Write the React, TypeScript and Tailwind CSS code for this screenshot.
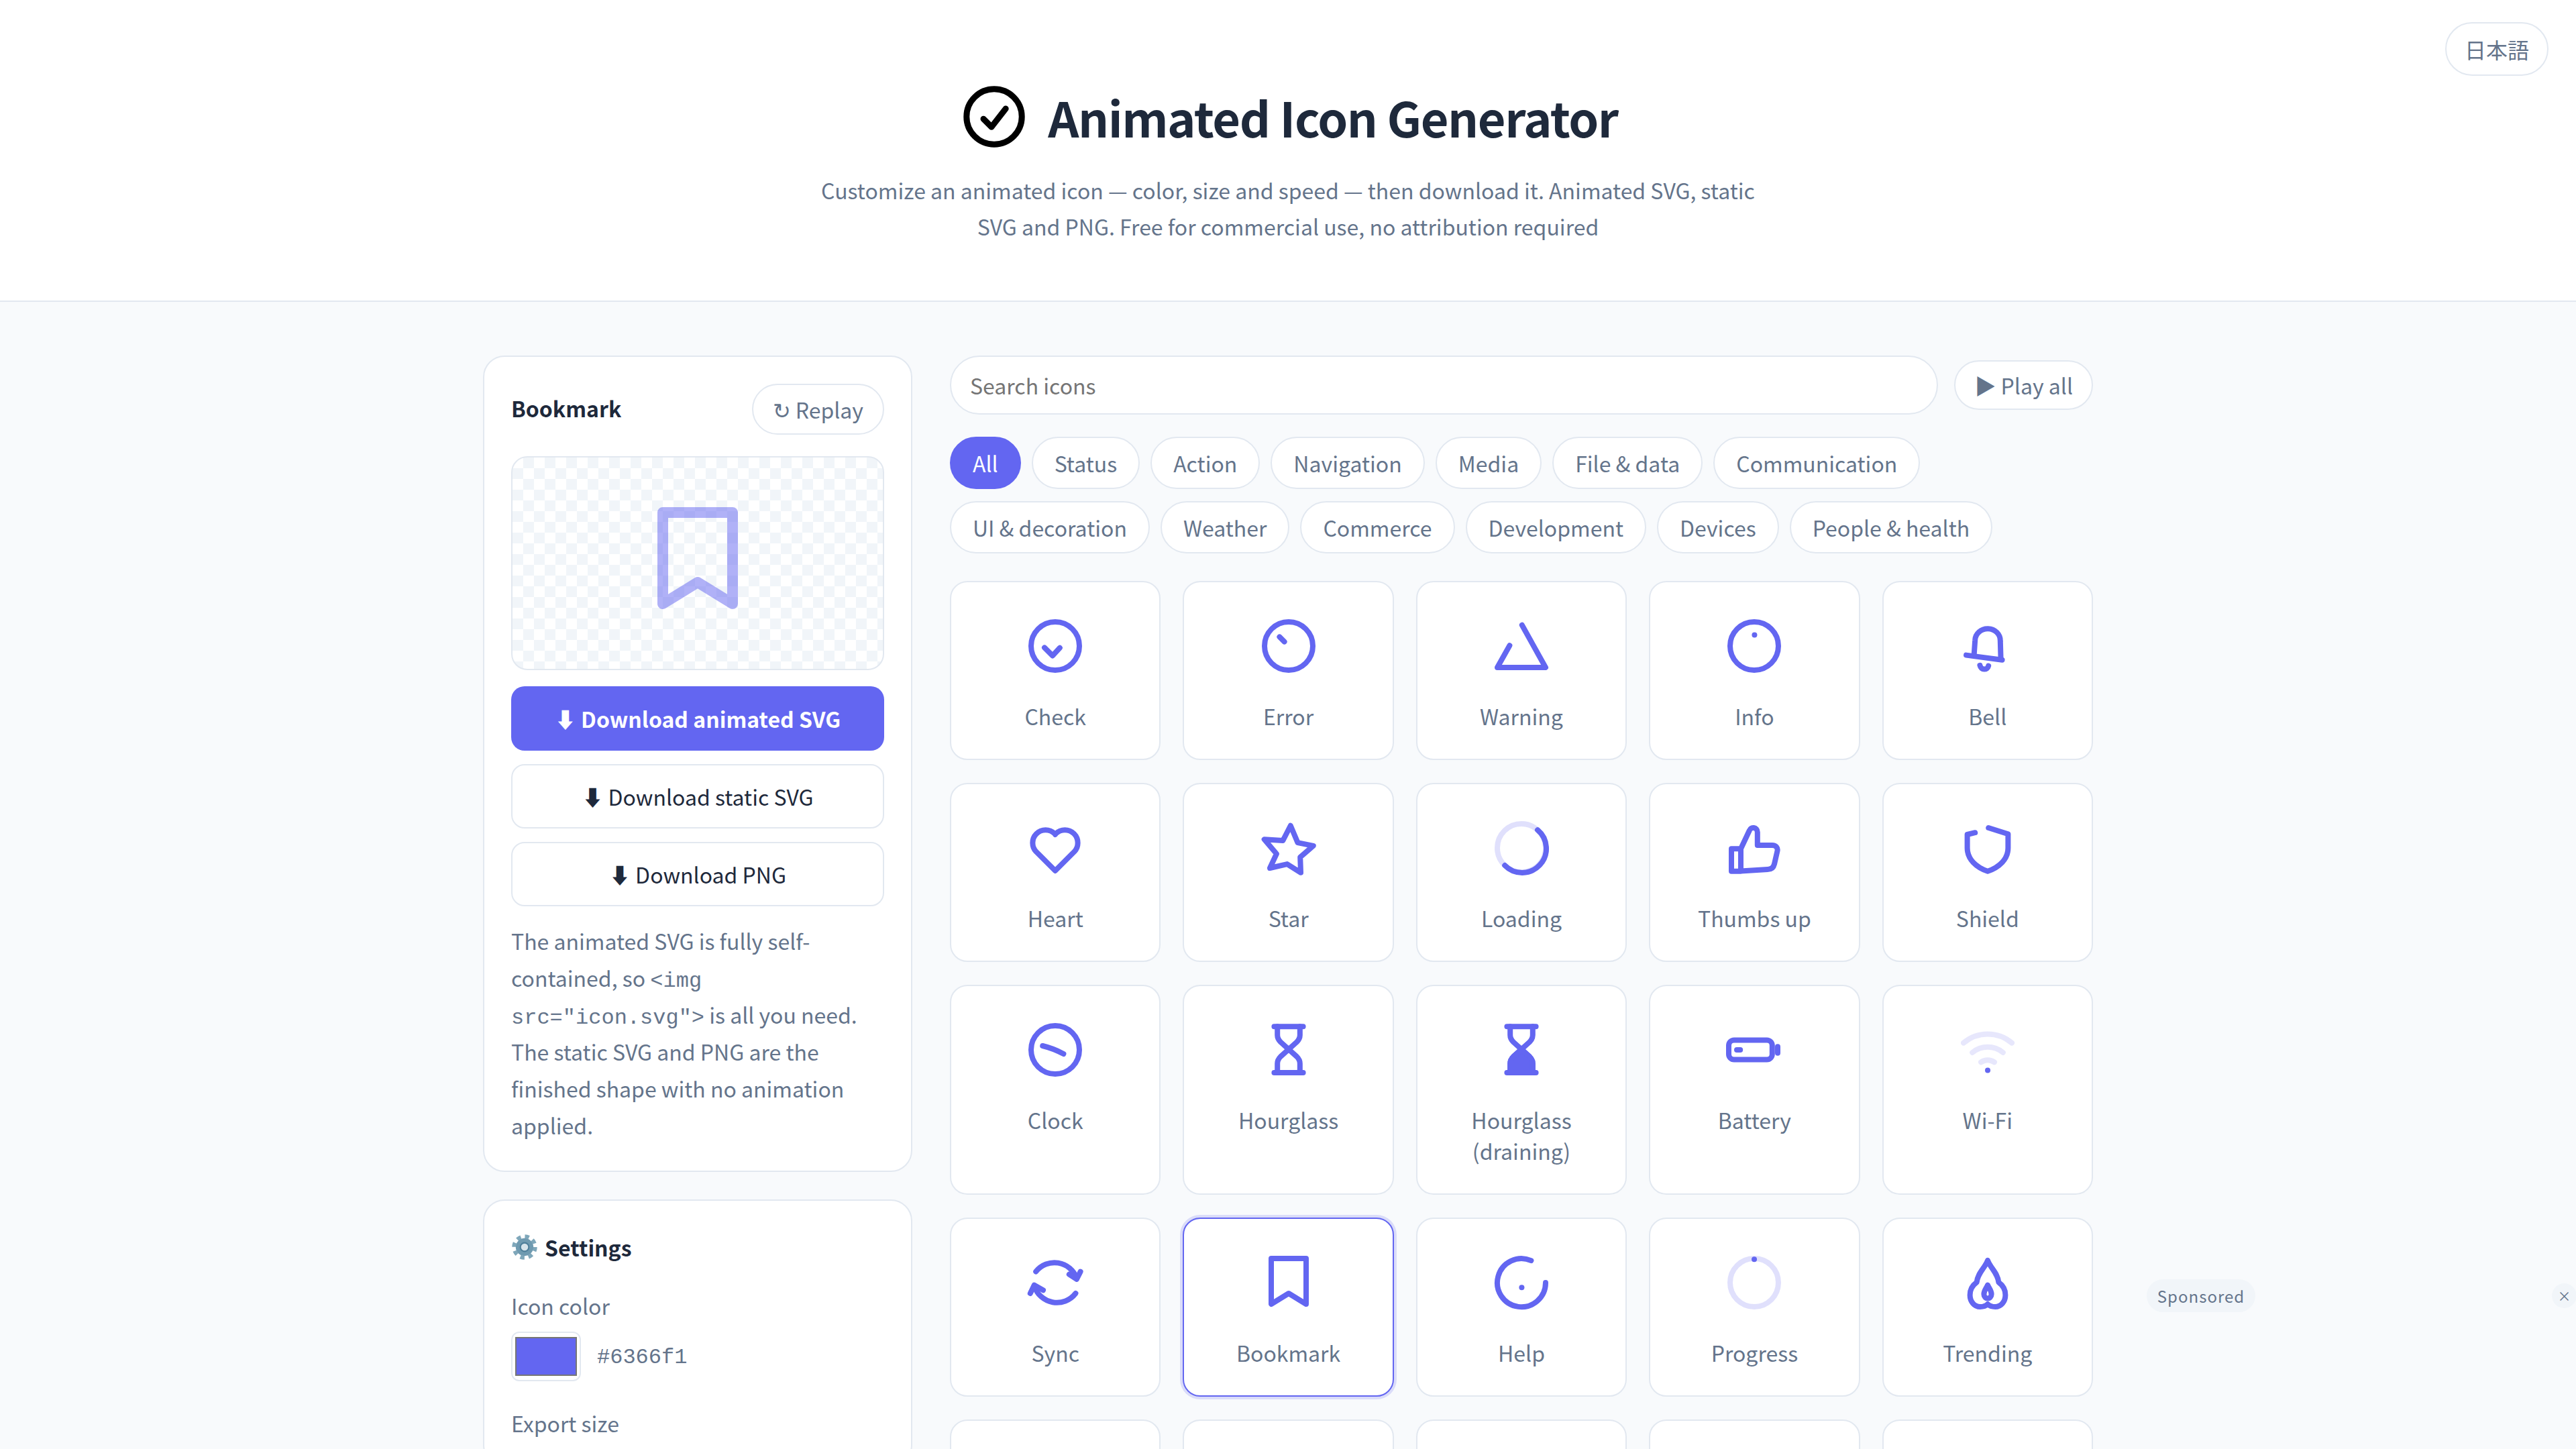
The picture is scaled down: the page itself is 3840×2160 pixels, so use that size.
import React from "react";

type IconDef = { name: string; body: React.ReactNode };

const Ring = () => <circle cx="12" cy="12" r="9" />;
const Track = () => <circle cx="12" cy="12" r="9" opacity="0.2" />;

const hourglassLines = (
  <g transform="translate(-0.2 0)">
    <path d="M6.8 3.3h10.8M6.8 20.5h10.8" />
    <path d="M8 3.3v3.2c0 1.1.5 1.9 1.2 2.6l6 5.4c.7.7 1.2 1.5 1.2 2.6v3.4" />
    <path d="M16.4 3.3v3.2c0 1.1-.5 1.9-1.2 2.6l-6 5.4c-.7.7-1.2 1.5-1.2 2.6v3.4" />
  </g>
);

const icons: IconDef[] = [
  { name: "Check", body: <><Ring /><path d="M8 12.6l3 3 2.7-2.9" /></> },
  { name: "Error", body: <><Ring /><path d="M8.6 8.6l1.8 1.8" /></> },
  { name: "Warning", body: <path d="M12.2 4.2 21 20H3l4.6-8.2" /> },
  { name: "Info", body: <><Ring /><path d="M12.1 7.9h.01" /></> },
  {
    name: "Bell",
    body: (
      <>
        <path d="M4 15.4 17.4 17.2" />
        <path d="M6.9 15.6 7.3 9.8a4.7 4.4 0 0 1 9.4.3l.2 6.8" />
        <path d="M9.1 19.2c.4 1.9 2.8 1.9 3.2.2" />
      </>
    ),
  },
  {
    name: "Heart",
    body: <path d="M12 20.5l-7-7a4.8 4.8 0 0 1 0-6.8 4.8 4.8 0 0 1 6.8 0l.2.3.2-.3a4.8 4.8 0 0 1 6.8 0 4.8 4.8 0 0 1 0 6.8z" />,
  },
  {
    name: "Star",
    body: <polygon points="12.7,3.7 15.37,10.04 21.2,11.2 16.3,15.44 16.5,21.2 11.44,18.03 5,19.5 7.48,14.19 2.9,8.8 9.85,9.26" />,
  },
  { name: "Loading", body: <><Track /><path d="M18 5.3A9 9 0 1 1 5.8 18.5" /></> },
  {
    name: "Thumbs up",
    body: (
      <path d="M3.5 12.3H7v8.4H3.5zM7 12.3l3.2-6.8c.5-1.4 3-1.4 3 .6v4.9h5.5c1.4 0 2.2 1 1.9 2.2l-1.1 4.8c-.3 1.3-1.1 2-2.5 2L7 20.6" />
    ),
  },
  {
    name: "Shield",
    body: <path d="M12.3 4.5 19.6 6.8V12c0 4.2-3.3 7.2-7.6 8.7C7.7 19.2 4.4 16.2 4.4 12V7l2.9-.7" />,
  },
  { name: "Clock", body: <><Ring /><path d="M7.3 10.5c2.5.6 5.2 1.6 7.8 3" /></> },
  { name: "Hourglass", body: hourglassLines },
  {
    name: "Hourglass (draining)",
    body: (
      <>
        {hourglassLines}
        <path fill="currentColor" d="M7.8 20.5v-3.4c0-1.1.5-1.9 1.2-2.6l3-2.7 3 2.7c.7.7 1.2 1.5 1.2 2.6v3.4z" />
      </>
    ),
  },
  {
    name: "Battery",
    body: (
      <>
        <rect x="2.5" y="8.4" width="16.2" height="7.2" rx="2" />
        <path d="M5.5 12h1.3M20.75 10.8v2.4" />
      </>
    ),
  },
  {
    name: "Wi-Fi",
    body: (
      <>
        <g opacity="0.15">
          <path d="M3 9.4a14 14 0 0 1 18 0" />
          <path d="M6.3 13a9 9 0 0 1 11.4 0" />
          <path d="M9.5 16.6a4.5 4.5 0 0 1 5 0" />
        </g>
        <path d="M12 19.6h.01" />
      </>
    ),
  },
  {
    name: "Sync",
    body: (
      <>
        <path d="M4.8 7.9A8.8 8.8 0 0 1 20 10.4" />
        <path d="M17.2 8.9 20 10.7l1.4-2.8" />
        <path d="M19.6 16A8.8 8.8 0 0 1 4.2 13.2" />
        <path d="M2.7 16l1.5-3.1 3.3 1.9" />
      </>
    ),
  },
  { name: "Bookmark", body: <path d="M5.5 3h13v17l-6.5-4-6.5 4z" /> },
  {
    name: "Help",
    body: (
      <>
        <path d="M15.6 3.8A9 9 0 1 0 21 12" />
        <path d="M12.1 13.8h.01" />
      </>
    ),
  },
  { name: "Progress", body: <><Track /><path d="M12 3.3h.01" /></> },
  {
    name: "Trending",
    body: (
      <>
        <path d="M12 3.7c1 2.8 3.8 4.8 4.1 8.2 1.5 1.1 2.5 2.6 2.5 4.7 0 2.4-1.6 4.4-3.8 4.4-1.2 0-2.2-.4-2.8-1-.6.6-1.6 1-2.8 1-2.2 0-3.8-2-3.8-4.4 0-2.1 1-3.6 2.5-4.7.3-3.4 3.1-5.4 4.1-8.2z" />
        <path d="M12 12.9c.5 1.2 1.4 2 1.4 3.4a1.4 1.6 0 0 1-2.8 0c0-1.4.9-2.2 1.4-3.4z" />
      </>
    ),
  },
];

const categoryRows = [
  ["All", "Status", "Action", "Navigation", "Media", "File & data", "Communication"],
  ["UI & decoration", "Weather", "Commerce", "Development", "Devices", "People & health"],
];

function Glyph({ children, className, weight = "2" }: { children: React.ReactNode; className: string; weight?: string }) {
  return (
    <svg viewBox="0 0 24 24" fill="none" stroke="currentColor" strokeWidth={weight} strokeLinecap="round" strokeLinejoin="round" className={className}>
      {children}
    </svg>
  );
}

function SettingsGear() {
  return (
    <svg viewBox="0 0 36 36" className="w-[40px] h-[38px] shrink-0">
      <circle cx="18" cy="18" r="15" fill="none" stroke="#7fa7ba" strokeWidth="5.5" strokeDasharray="6 5.78" />
      <circle cx="18" cy="18" r="12.5" fill="#6f9ab0" />
      <circle cx="18" cy="18" r="6" fill="#d5e3ea" stroke="#4e7f9a" strokeWidth="2" />
    </svg>
  );
}

function IconCard({ icon, selected }: { icon: IconDef; selected: boolean }) {
  return (
    <button
      className={
        selected
          ? "flex flex-col items-center pt-[47px] pb-[41px] px-[16px] bg-white rounded-[26px] border-2 border-[#6366f1] shadow-[0_0_0_4px_rgba(99,102,241,0.2)]"
          : "flex flex-col items-center pt-[47px] pb-[41px] px-[16px] bg-white rounded-[26px] border-2 border-[#e2e8f0]"
      }
    >
      <Glyph className="w-[96px] h-[96px] text-[#6366f1]">{icon.body}</Glyph>
      <span className="mt-[33px] text-[32px] leading-[46px] text-[#64748b] text-center">{icon.name}</span>
    </button>
  );
}

export default function App() {
  return (
    <div className="relative h-[2160px] overflow-hidden bg-[#f8fafc] font-['Noto_Sans_CJK_JP','Noto_Sans',sans-serif]">
      <button className="absolute top-[33px] right-[41px] h-[80px] px-[27px] rounded-full bg-white border-2 border-[#e2e8f0] text-[32px] text-[#64748b]">
        日本語
      </button>

      <header className="h-[450px] bg-white border-b-2 border-[#e2e8f0] flex flex-col items-center pt-[126px]">
        <h1 className="ml-[6px] flex items-center gap-[32px] h-[96px] text-[72px] font-bold tracking-[-1.44px] text-[#1e293b]">
          <Glyph weight="2.25" className="w-[96px] h-[96px] text-black">
            <circle cx="12" cy="12" r="10.3" />
            <path d="M8 12.8l3 3L16.3 9" />
          </Glyph>
          Animated Icon Generator
        </h1>
        <p className="mt-[34px] w-[1440px] text-center text-[32px] leading-[54.4px] text-[#64748b]">
          Customize an animated icon — color, size and speed — then download it. Animated SVG, static SVG and PNG. Free for commercial use, no attribution required
        </p>
      </header>

      <main className="w-[2400px] mx-auto pt-[80px] flex gap-[56px]">
        <aside className="w-[640px] shrink-0 flex flex-col gap-[41px]">
          <section className="bg-white rounded-[32px] border-2 border-[#e2e8f0] p-[40px]">
            <div className="flex items-center justify-between">
              <h2 className="mb-[4px] text-[32px] font-bold text-[#1e293b]">Bookmark</h2>
              <button className="h-[76px] px-[29px] rounded-full border-2 border-[#e2e8f0] text-[32px] text-[#64748b]">↻ Replay</button>
            </div>
            <div className="mt-[32px] h-[319px] rounded-[24px] border-2 border-[#e2e8f0] flex items-center justify-center bg-[repeating-conic-gradient(#f1f5f9_0_25%,#ffffff_0_50%)] bg-[length:32px_32px]">
              <Glyph className="mb-[8px] w-[192px] h-[192px] text-[#6366f1] opacity-50">
                <path d="M5.5 3h13v17l-6.5-4-6.5 4z" />
              </Glyph>
            </div>
            <div className="mt-[24px] flex flex-col gap-[20px]">
              <button className="h-[96px] rounded-[20px] bg-[#6366f1] text-white text-[32px] font-bold">⬇ Download animated SVG</button>
              <button className="h-[96px] rounded-[20px] bg-white border-2 border-[#e2e8f0] text-[#1e293b] text-[32px]">⬇ Download static SVG</button>
              <button className="h-[96px] rounded-[20px] bg-white border-2 border-[#e2e8f0] text-[#1e293b] text-[32px]">⬇ Download PNG</button>
            </div>
            <p className="mt-[24px] text-[32px] leading-[55px] text-[#64748b]">
              The animated SVG is fully self-contained, so{" "}
              <code className="font-['Liberation_Mono',monospace] text-[32px] leading-[40px]">{'<img src="icon.svg">'}</code> is all you need. The static SVG and PNG are the finished shape with no animation applied.
            </p>
          </section>

          <section className="bg-white rounded-[32px] border-2 border-[#e2e8f0] p-[40px]">
            <h2 className="flex items-center gap-[10px] text-[32px] font-bold text-[#1e293b] h-[58px]">
              <SettingsGear />
              Settings
            </h2>
            <div className="mt-[35px] text-[32px] leading-[46px] text-[#64748b]">Icon color</div>
            <div className="mt-[16px] flex items-center gap-[24px]">
              <div className="w-[104px] h-[74px] rounded-[12px] border-2 border-[#e2e8f0] bg-white flex items-center justify-center">
                <div className="w-[92px] h-[58px] bg-[#6366f1] border-2 border-[#767676]"></div>
              </div>
              <span className="pt-[3px] font-['Liberation_Mono',monospace] text-[32px] text-[#64748b]">#6366f1</span>
            </div>
            <div className="mt-[39px] text-[32px] leading-[46px] text-[#64748b]">Export size</div>
          </section>
        </aside>

        <div className="flex-1 min-w-0">
          <div className="flex items-center gap-[24px]">
            <input
              readOnly
              placeholder="Search icons"
              className="flex-1 min-w-0 h-[88px] px-[28px] rounded-full bg-white border-2 border-[#e2e8f0] text-[32px] outline-none placeholder:text-[#757575]"
            />
            <button className="shrink-0 h-[74px] px-[28px] rounded-full border-2 border-[#e2e8f0] bg-white text-[32px] text-[#64748b]">▶ Play all</button>
          </div>

          <div className="mt-[33px] flex flex-col gap-[18px]">
            {categoryRows.map((row, r) => (
              <div key={r} className="flex gap-[16px]">
                {row.map((c) => (
                  <button
                    key={c}
                    className={
                      c === "All"
                        ? "h-[78px] px-[32px] rounded-full border-2 border-[#6366f1] bg-[#6366f1] text-white text-[32px]"
                        : "h-[78px] px-[32px] rounded-full border-2 border-[#e2e8f0] bg-white text-[#64748b] text-[32px]"
                    }
                  >
                    {c}
                  </button>
                ))}
              </div>
            ))}
          </div>

          <div className="mt-[41px] grid grid-cols-5 gap-x-[33px] gap-y-[34px]">
            {icons.map((icon) => (
              <IconCard key={icon.name} icon={icon} selected={icon.name === "Bookmark"} />
            ))}
            {[0, 1, 2, 3, 4].map((i) => (
              <div key={i} className="h-[267px] bg-white rounded-[26px] border-2 border-[#e2e8f0]"></div>
            ))}
          </div>
        </div>
      </main>

      <span className="absolute left-[3200px] top-[1907px] h-[49px] w-[162px] rounded-full bg-[#f1f5f9] text-[24px] tracking-[1px] text-[#64748b] flex items-center justify-center">
        Sponsored
      </span>
      <span className="absolute left-[3804px] top-[1913px] h-[37px] w-[37px] rounded-full bg-[#f1f5f9] text-[20px] text-[#64748b] flex items-center justify-center">
        ×
      </span>
    </div>
  );
}
